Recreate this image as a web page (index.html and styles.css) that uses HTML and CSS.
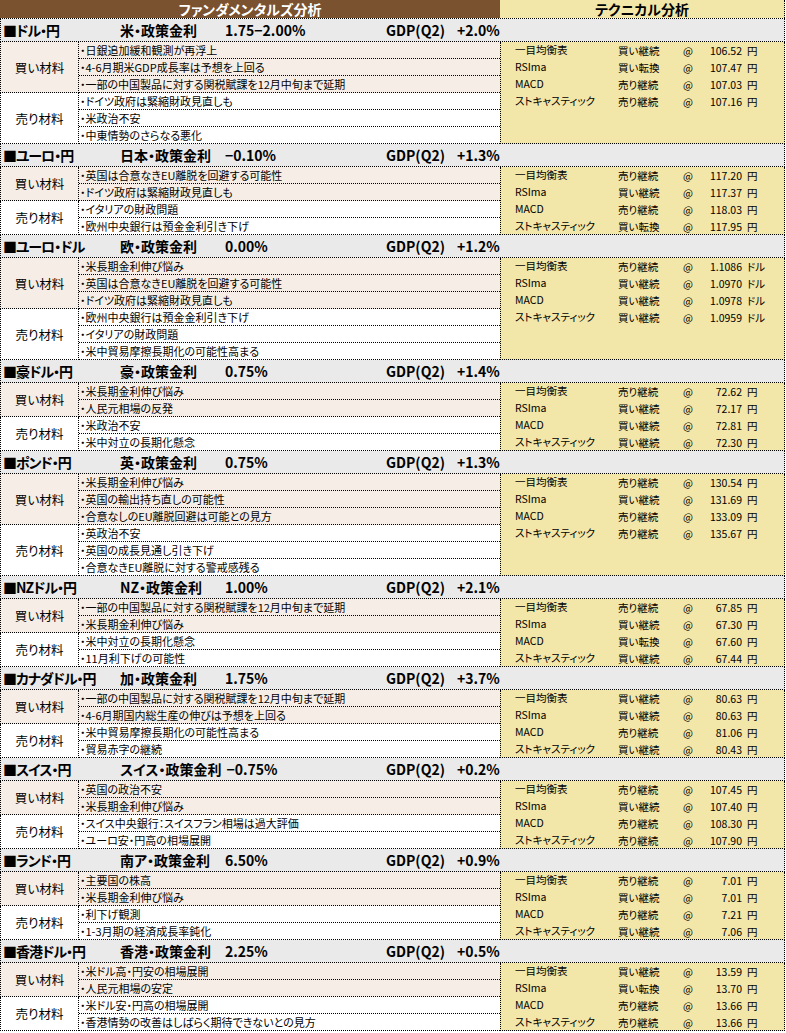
FILE: index.html
```html
<!DOCTYPE html>
<html lang="ja">
<head>
<meta charset="utf-8">
<title>ファンダメンタルズ分析・テクニカル分析</title>
<link rel="stylesheet" href="styles.css">
</head>
<body>
<div class="sheet">
  <div class="top">
    <div class="top-fund">ファンダメンタルズ分析</div>
    <div class="top-tech">テクニカル分析</div>
  </div>

  <!-- 1 -->
  <div class="sec-head">
    <div class="left-group"><span class="pair">■ドル・円</span><span class="policy">米・政策金利</span><span class="rate">1.75−2.00%</span></div>
    <span class="gdp">GDP(Q2)</span><span class="gdpv">+2.0%</span>
  </div>
  <div class="sec-body">
    <div class="label buy r3">買い材料</div>
    <div class="item buy">・日銀追加緩和観測が再浮上</div>
    <div class="tech r6">
      <div class="trow"><span class="tl">一目均衡表</span><span class="ts">買い継続</span><span class="at">@</span><span class="tn">106.52</span><span class="tu">円</span></div>
      <div class="trow"><span class="tl">RSIma</span><span class="ts">買い転換</span><span class="at">@</span><span class="tn">107.47</span><span class="tu">円</span></div>
      <div class="trow"><span class="tl">MACD</span><span class="ts">売り継続</span><span class="at">@</span><span class="tn">107.03</span><span class="tu">円</span></div>
      <div class="trow"><span class="tl">ストキャスティック</span><span class="ts">売り継続</span><span class="at">@</span><span class="tn">107.16</span><span class="tu">円</span></div>
    </div>
    <div class="item buy">・4-6月期米GDP成長率は予想を上回る</div>
    <div class="item buy">・一部の中国製品に対する関税賦課を12月中旬まで延期</div>
    <div class="label r3">売り材料</div>
    <div class="item">・ドイツ政府は緊縮財政見直しも</div>
    <div class="item">・米政治不安</div>
    <div class="item">・中東情勢のさらなる悪化</div>
  </div>

  <!-- 2 -->
  <div class="sec-head">
    <div class="left-group"><span class="pair">■ユーロ・円</span><span class="policy">日本・政策金利</span><span class="rate">−0.10%</span></div>
    <span class="gdp">GDP(Q2)</span><span class="gdpv">+1.3%</span>
  </div>
  <div class="sec-body">
    <div class="label buy r2">買い材料</div>
    <div class="item buy">・英国は合意なきEU離脱を回避する可能性</div>
    <div class="tech r4">
      <div class="trow"><span class="tl">一目均衡表</span><span class="ts">売り継続</span><span class="at">@</span><span class="tn">117.20</span><span class="tu">円</span></div>
      <div class="trow"><span class="tl">RSIma</span><span class="ts">買い継続</span><span class="at">@</span><span class="tn">117.37</span><span class="tu">円</span></div>
      <div class="trow"><span class="tl">MACD</span><span class="ts">売り継続</span><span class="at">@</span><span class="tn">118.03</span><span class="tu">円</span></div>
      <div class="trow"><span class="tl">ストキャスティック</span><span class="ts">買い転換</span><span class="at">@</span><span class="tn">117.95</span><span class="tu">円</span></div>
    </div>
    <div class="item buy">・ドイツ政府は緊縮財政見直しも</div>
    <div class="label r2">売り材料</div>
    <div class="item">・イタリアの財政問題</div>
    <div class="item">・欧州中央銀行は預金金利引き下げ</div>
  </div>

  <!-- 3 -->
  <div class="sec-head">
    <div class="left-group"><span class="pair">■ユーロ・ドル</span><span class="policy">欧・政策金利</span><span class="rate">0.00%</span></div>
    <span class="gdp">GDP(Q2)</span><span class="gdpv">+1.2%</span>
  </div>
  <div class="sec-body">
    <div class="label buy r3">買い材料</div>
    <div class="item buy">・米長期金利伸び悩み</div>
    <div class="tech r6">
      <div class="trow"><span class="tl">一目均衡表</span><span class="ts">売り継続</span><span class="at">@</span><span class="tn">1.1086</span><span class="tu">ドル</span></div>
      <div class="trow"><span class="tl">RSIma</span><span class="ts">買い継続</span><span class="at">@</span><span class="tn">1.0970</span><span class="tu">ドル</span></div>
      <div class="trow"><span class="tl">MACD</span><span class="ts">買い継続</span><span class="at">@</span><span class="tn">1.0978</span><span class="tu">ドル</span></div>
      <div class="trow"><span class="tl">ストキャスティック</span><span class="ts">買い継続</span><span class="at">@</span><span class="tn">1.0959</span><span class="tu">ドル</span></div>
    </div>
    <div class="item buy">・英国は合意なきEU離脱を回避する可能性</div>
    <div class="item buy">・ドイツ政府は緊縮財政見直しも</div>
    <div class="label r3">売り材料</div>
    <div class="item">・欧州中央銀行は預金金利引き下げ</div>
    <div class="item">・イタリアの財政問題</div>
    <div class="item">・米中貿易摩擦長期化の可能性高まる</div>
  </div>

  <!-- 4 -->
  <div class="sec-head">
    <div class="left-group"><span class="pair">■豪ドル・円</span><span class="policy">豪・政策金利</span><span class="rate">0.75%</span></div>
    <span class="gdp">GDP(Q2)</span><span class="gdpv">+1.4%</span>
  </div>
  <div class="sec-body">
    <div class="label buy r2">買い材料</div>
    <div class="item buy">・米長期金利伸び悩み</div>
    <div class="tech r4">
      <div class="trow"><span class="tl">一目均衡表</span><span class="ts">売り継続</span><span class="at">@</span><span class="tn">72.62</span><span class="tu">円</span></div>
      <div class="trow"><span class="tl">RSIma</span><span class="ts">買い継続</span><span class="at">@</span><span class="tn">72.17</span><span class="tu">円</span></div>
      <div class="trow"><span class="tl">MACD</span><span class="ts">買い継続</span><span class="at">@</span><span class="tn">72.81</span><span class="tu">円</span></div>
      <div class="trow"><span class="tl">ストキャスティック</span><span class="ts">買い継続</span><span class="at">@</span><span class="tn">72.30</span><span class="tu">円</span></div>
    </div>
    <div class="item buy">・人民元相場の反発</div>
    <div class="label r2">売り材料</div>
    <div class="item">・米政治不安</div>
    <div class="item">・米中対立の長期化懸念</div>
  </div>

  <!-- 5 -->
  <div class="sec-head">
    <div class="left-group"><span class="pair">■ポンド・円</span><span class="policy">英・政策金利</span><span class="rate">0.75%</span></div>
    <span class="gdp">GDP(Q2)</span><span class="gdpv">+1.3%</span>
  </div>
  <div class="sec-body">
    <div class="label buy r3">買い材料</div>
    <div class="item buy">・米長期金利伸び悩み</div>
    <div class="tech r6">
      <div class="trow"><span class="tl">一目均衡表</span><span class="ts">売り継続</span><span class="at">@</span><span class="tn">130.54</span><span class="tu">円</span></div>
      <div class="trow"><span class="tl">RSIma</span><span class="ts">買い継続</span><span class="at">@</span><span class="tn">131.69</span><span class="tu">円</span></div>
      <div class="trow"><span class="tl">MACD</span><span class="ts">売り継続</span><span class="at">@</span><span class="tn">133.09</span><span class="tu">円</span></div>
      <div class="trow"><span class="tl">ストキャスティック</span><span class="ts">売り継続</span><span class="at">@</span><span class="tn">135.67</span><span class="tu">円</span></div>
    </div>
    <div class="item buy">・英国の輸出持ち直しの可能性</div>
    <div class="item buy">・合意なしのEU離脱回避は可能との見方</div>
    <div class="label r3">売り材料</div>
    <div class="item">・英政治不安</div>
    <div class="item">・英国の成長見通し引き下げ</div>
    <div class="item">・合意なきEU離脱に対する警戒感残る</div>
  </div>

  <!-- 6 -->
  <div class="sec-head">
    <div class="left-group"><span class="pair">■NZドル・円</span><span class="policy">NZ・政策金利</span><span class="rate">1.00%</span></div>
    <span class="gdp">GDP(Q2)</span><span class="gdpv">+2.1%</span>
  </div>
  <div class="sec-body">
    <div class="label buy r2">買い材料</div>
    <div class="item buy">・一部の中国製品に対する関税賦課を12月中旬まで延期</div>
    <div class="tech r4">
      <div class="trow"><span class="tl">一目均衡表</span><span class="ts">売り継続</span><span class="at">@</span><span class="tn">67.85</span><span class="tu">円</span></div>
      <div class="trow"><span class="tl">RSIma</span><span class="ts">買い継続</span><span class="at">@</span><span class="tn">67.30</span><span class="tu">円</span></div>
      <div class="trow"><span class="tl">MACD</span><span class="ts">買い転換</span><span class="at">@</span><span class="tn">67.60</span><span class="tu">円</span></div>
      <div class="trow"><span class="tl">ストキャスティック</span><span class="ts">買い継続</span><span class="at">@</span><span class="tn">67.44</span><span class="tu">円</span></div>
    </div>
    <div class="item buy">・米長期金利伸び悩み</div>
    <div class="label r2">売り材料</div>
    <div class="item">・米中対立の長期化懸念</div>
    <div class="item">・11月利下げの可能性</div>
  </div>

  <!-- 7 -->
  <div class="sec-head">
    <div class="left-group"><span class="pair">■カナダドル・円</span><span class="policy">加・政策金利</span><span class="rate">1.75%</span></div>
    <span class="gdp">GDP(Q2)</span><span class="gdpv">+3.7%</span>
  </div>
  <div class="sec-body">
    <div class="label buy r2">買い材料</div>
    <div class="item buy">・一部の中国製品に対する関税賦課を12月中旬まで延期</div>
    <div class="tech r4">
      <div class="trow"><span class="tl">一目均衡表</span><span class="ts">買い継続</span><span class="at">@</span><span class="tn">80.63</span><span class="tu">円</span></div>
      <div class="trow"><span class="tl">RSIma</span><span class="ts">買い継続</span><span class="at">@</span><span class="tn">80.63</span><span class="tu">円</span></div>
      <div class="trow"><span class="tl">MACD</span><span class="ts">売り継続</span><span class="at">@</span><span class="tn">81.06</span><span class="tu">円</span></div>
      <div class="trow"><span class="tl">ストキャスティック</span><span class="ts">買い継続</span><span class="at">@</span><span class="tn">80.43</span><span class="tu">円</span></div>
    </div>
    <div class="item buy">・4-6月期国内総生産の伸びは予想を上回る</div>
    <div class="label r2">売り材料</div>
    <div class="item">・米中貿易摩擦長期化の可能性高まる</div>
    <div class="item">・貿易赤字の継続</div>
  </div>

  <!-- 8 -->
  <div class="sec-head">
    <div class="left-group"><span class="pair">■スイス・円</span><span class="policy">スイス・政策金利</span><span class="rate">−0.75%</span></div>
    <span class="gdp">GDP(Q2)</span><span class="gdpv">+0.2%</span>
  </div>
  <div class="sec-body">
    <div class="label buy r2">買い材料</div>
    <div class="item buy">・英国の政治不安</div>
    <div class="tech r4">
      <div class="trow"><span class="tl">一目均衡表</span><span class="ts">売り継続</span><span class="at">@</span><span class="tn">107.45</span><span class="tu">円</span></div>
      <div class="trow"><span class="tl">RSIma</span><span class="ts">買い継続</span><span class="at">@</span><span class="tn">107.40</span><span class="tu">円</span></div>
      <div class="trow"><span class="tl">MACD</span><span class="ts">売り継続</span><span class="at">@</span><span class="tn">108.30</span><span class="tu">円</span></div>
      <div class="trow"><span class="tl">ストキャスティック</span><span class="ts">売り継続</span><span class="at">@</span><span class="tn">107.90</span><span class="tu">円</span></div>
    </div>
    <div class="item buy">・米長期金利伸び悩み</div>
    <div class="label r2">売り材料</div>
    <div class="item">・スイス中央銀行：スイスフラン相場は過大評価</div>
    <div class="item">・ユーロ安・円高の相場展開</div>
  </div>

  <!-- 9 -->
  <div class="sec-head">
    <div class="left-group"><span class="pair">■ランド・円</span><span class="policy">南ア・政策金利</span><span class="rate">6.50%</span></div>
    <span class="gdp">GDP(Q2)</span><span class="gdpv">+0.9%</span>
  </div>
  <div class="sec-body">
    <div class="label buy r2">買い材料</div>
    <div class="item buy">・主要国の株高</div>
    <div class="tech r4">
      <div class="trow"><span class="tl">一目均衡表</span><span class="ts">売り継続</span><span class="at">@</span><span class="tn">7.01</span><span class="tu">円</span></div>
      <div class="trow"><span class="tl">RSIma</span><span class="ts">買い継続</span><span class="at">@</span><span class="tn">7.01</span><span class="tu">円</span></div>
      <div class="trow"><span class="tl">MACD</span><span class="ts">売り継続</span><span class="at">@</span><span class="tn">7.21</span><span class="tu">円</span></div>
      <div class="trow"><span class="tl">ストキャスティック</span><span class="ts">買い継続</span><span class="at">@</span><span class="tn">7.06</span><span class="tu">円</span></div>
    </div>
    <div class="item buy">・米長期金利伸び悩み</div>
    <div class="label r2">売り材料</div>
    <div class="item">・利下げ観測</div>
    <div class="item">・1-3月期の経済成長率鈍化</div>
  </div>

  <!-- 10 -->
  <div class="sec-head">
    <div class="left-group"><span class="pair">■香港ドル・円</span><span class="policy">香港・政策金利</span><span class="rate">2.25%</span></div>
    <span class="gdp">GDP(Q2)</span><span class="gdpv">+0.5%</span>
  </div>
  <div class="sec-body">
    <div class="label buy r2">買い材料</div>
    <div class="item buy">・米ドル高・円安の相場展開</div>
    <div class="tech r4">
      <div class="trow"><span class="tl">一目均衡表</span><span class="ts">買い継続</span><span class="at">@</span><span class="tn">13.59</span><span class="tu">円</span></div>
      <div class="trow"><span class="tl">RSIma</span><span class="ts">買い転換</span><span class="at">@</span><span class="tn">13.70</span><span class="tu">円</span></div>
      <div class="trow"><span class="tl">MACD</span><span class="ts">売り継続</span><span class="at">@</span><span class="tn">13.66</span><span class="tu">円</span></div>
      <div class="trow"><span class="tl">ストキャスティック</span><span class="ts">売り継続</span><span class="at">@</span><span class="tn">13.66</span><span class="tu">円</span></div>
    </div>
    <div class="item buy">・人民元相場の安定</div>
    <div class="label r2">売り材料</div>
    <div class="item">・米ドル安・円高の相場展開</div>
    <div class="item">・香港情勢の改善はしばらく期待できないとの見方</div>
  </div>
</div>
</body>
</html>
```

FILE: styles.css
```css
* {
  box-sizing: border-box;
}

body {
  margin: 0;
  background: #ffffff;
  color: #000000;
  font-family: "Noto Sans CJK JP", "Noto Sans", sans-serif;
  font-feature-settings: "palt";
}

.sheet {
  width: 785px;
}

.top {
  display: grid;
  grid-template-columns: 500px 285px;
  height: 19px;
  border-bottom: 1px dotted #000;
}

.top-fund {
  background: #7b5230;
  color: #ffffff;
  font-weight: bold;
  font-size: 14px;
  line-height: 18px;
  text-align: center;
}

.top-tech {
  background: #f2e6a8;
  color: #000000;
  font-weight: bold;
  font-size: 14px;
  line-height: 18px;
  text-align: center;
  border-right: 1px dotted #000;
}

.sec-head {
  display: flex;
  align-items: center;
  height: 23px;
  background: #eaeaea;
  border-left: 1px dotted #000;
  border-right: 1px dotted #000;
  border-bottom: 1px dotted #000;
  padding-left: 2px;
  font-size: 14px;
  font-weight: bold;
  line-height: 22px;
  white-space: nowrap;
}

.left-group {
  display: flex;
  width: 383px;
}

.pair {
  width: 117px;
  letter-spacing: -1px;
}

.policy {
  min-width: 100px;
  padding-right: 5px;
  box-sizing: content-box;
}

.gdp {
  width: 71px;
}

.sec-body {
  display: grid;
  grid-template-columns: 79px 421px 285px;
  grid-auto-rows: 17px;
  grid-auto-flow: row dense;
}

.label {
  grid-column: 1;
  display: flex;
  align-items: center;
  justify-content: center;
  font-size: 12.5px;
  border-left: 1px dotted #000;
  border-right: 1px dotted #000;
  border-bottom: 1px dotted #000;
  background: #ffffff;
}

.label.buy,
.item.buy {
  background: #f6eee6;
}

.r2 {
  grid-row: span 2;
}

.r3 {
  grid-row: span 3;
}

.r4 {
  grid-row: span 4;
}

.r6 {
  grid-row: span 6;
}

.item {
  grid-column: 2;
  font-size: 11px;
  line-height: 16px;
  padding-left: 1px;
  border-bottom: 1px dotted #000;
  background: #ffffff;
  white-space: nowrap;
  overflow: hidden;
}

.tech {
  grid-column: 3;
  background: #f2e6a8;
  border-left: 1px dotted #000;
  border-right: 1px dotted #000;
  border-bottom: 1px dotted #000;
  padding-left: 14px;
}

.trow {
  display: grid;
  grid-template-columns: 103px 65px 20px 39px auto;
  height: 17px;
  align-items: center;
  font-size: 10.5px;
  line-height: 16px;
  white-space: nowrap;
}

.tl {
  position: relative;
  top: -1px;
}

.tn {
  text-align: right;
}

.tu {
  padding-left: 5px;
}
```
